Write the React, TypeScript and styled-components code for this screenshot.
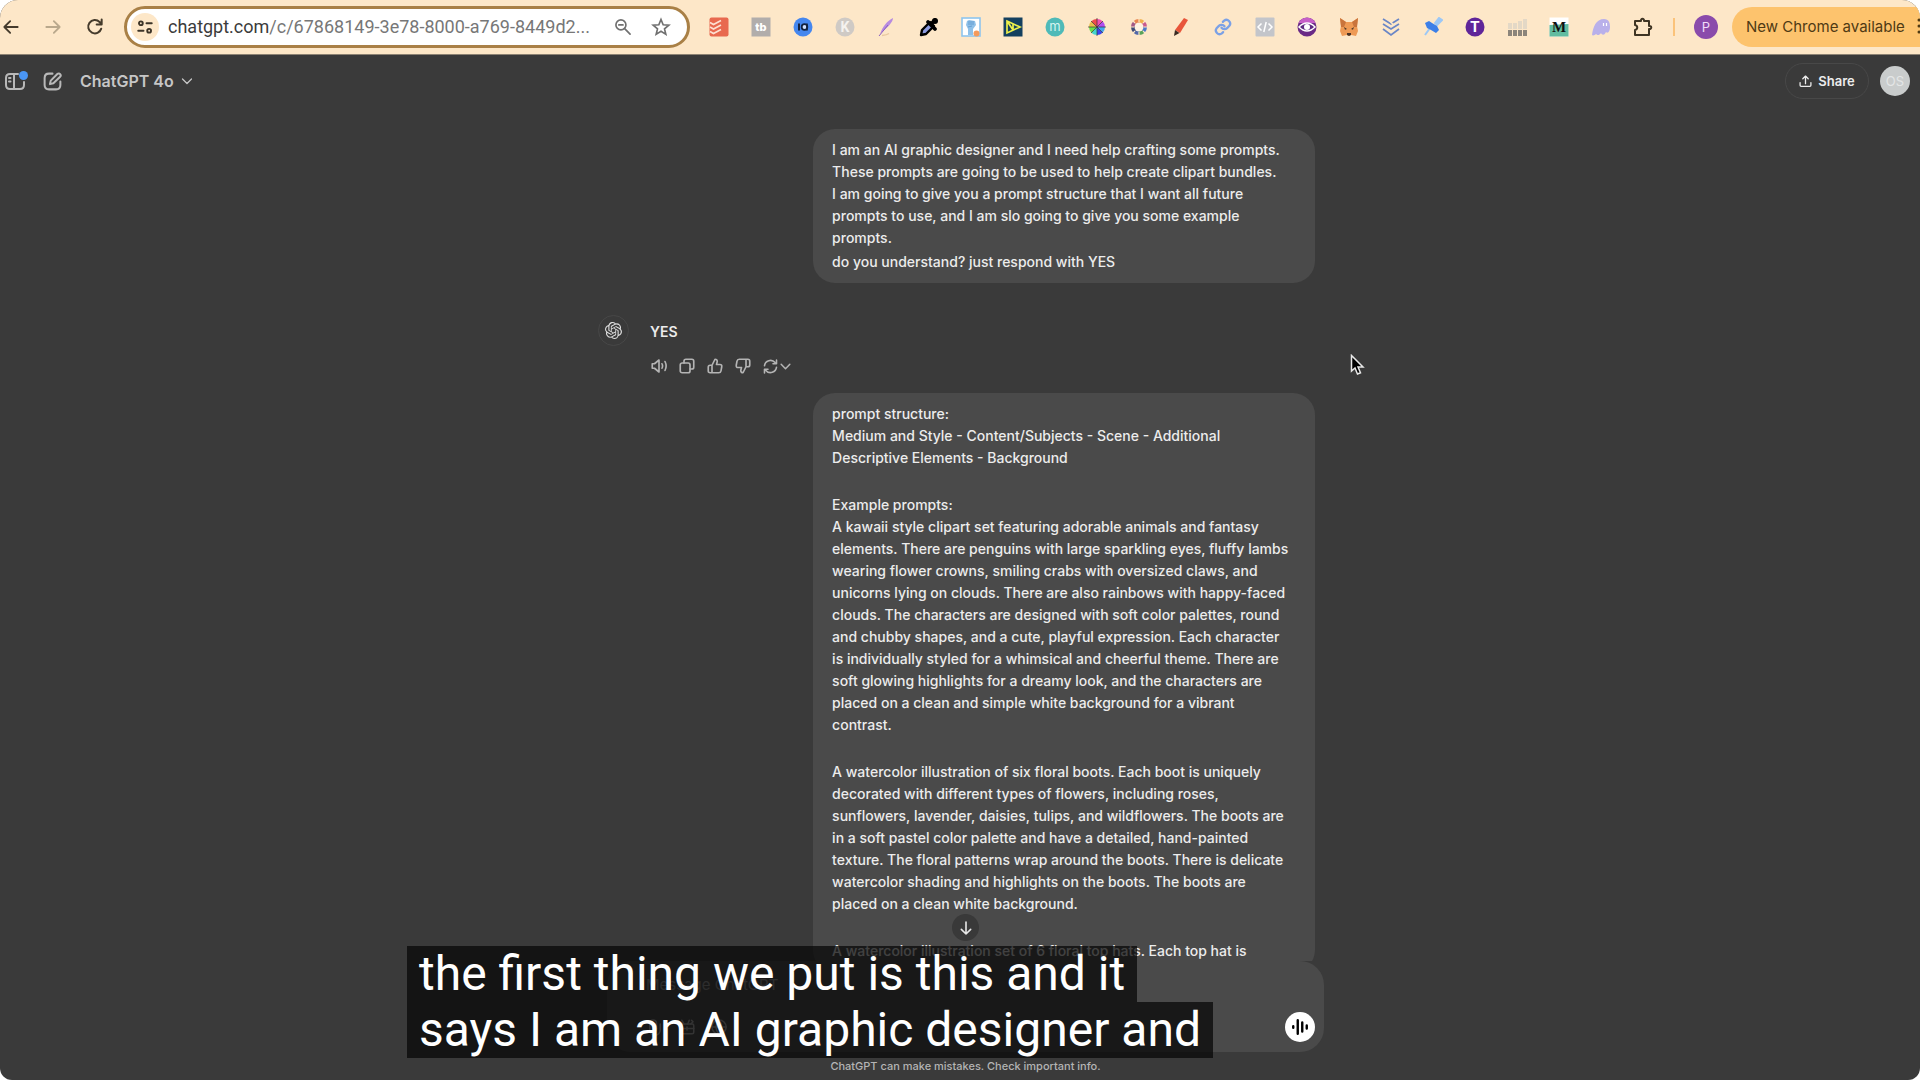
import React from "react";
import styled, { createGlobalStyle } from "styled-components";
import { SiOpenai } from "react-icons/si";

const GlobalStyle = createGlobalStyle`
  * { box-sizing: border-box; }
  body { margin: 0; background: #fff; font-family: Inter, "Liberation Sans", sans-serif; }
  button, input { font-family: inherit; }
  p { margin: 0; }
`;

const Screen = styled.div`
  position: relative;
  display: flex;
  flex-direction: column;
  height: 100vh;
  overflow: hidden;
  border-radius: 18px 18px 12px 12px;
  background: #3a3a3a;
  color: #ececec;
`;

/* ---------- browser toolbar ---------- */

const BrowserBar = styled.header`
  display: flex;
  align-items: center;
  flex: none;
  height: 55px;
  padding-bottom: 1px;
  background: #fde7c8;
  border-bottom: 1px solid #8d8374;
`;

const PlainButton = styled.button`
  display: flex;
  align-items: center;
  justify-content: center;
  padding: 0;
  border: 0;
  background: none;
  color: inherit;
  cursor: pointer;
`;

const NavButtons = styled.nav`
  display: flex;
  gap: 22px;
  padding: 0 19px 0 1px;
  color: #453b2c;
`;

const NavButton = styled(PlainButton)`
  width: 20px;
  height: 24px;
  &:disabled { color: #b9a88c; }
`;

const AddressBar = styled.div`
  display: flex;
  align-items: center;
  flex: 1;
  min-width: 0;
  height: 42px;
  padding: 0 16px 0 4px;
  border: 3px solid #a98046;
  border-radius: 21px;
  background: #fff;
  color: #6d6d6d;
`;

const SiteInfo = styled(PlainButton)`
  flex: none;
  width: 28px;
  height: 28px;
  border-radius: 50%;
  background: #fde7c8;
  color: #3c3428;
`;

const Address = styled.a`
  flex: 1;
  min-width: 0;
  overflow: hidden;
  padding-left: 9px;
  font: 400 18px/24px Roboto, sans-serif;
  color: #777;
  text-decoration: none;
  white-space: nowrap;
  span { color: #3b3b3b; }
`;

const AddressActions = styled.div`
  display: flex;
  gap: 18px;
  color: #707070;
`;

const Extensions = styled.div`
  display: flex;
  flex: none;
  padding: 0 9px 0 8px;
`;

const ExtensionButton = styled(PlainButton)`
  width: 42px;
  height: 32px;
`;

const Divider = styled.span`
  width: 2px;
  height: 18px;
  background: #fbc37a;
`;

const Profile = styled(PlainButton)`
  width: 24px;
  height: 24px;
  margin: 0 14px 0 19px;
  border-radius: 50%;
  background: #8a4bab;
  color: #f0dcf8;
  font-size: 13px;
`;

const UpdateButton = styled(PlainButton)`
  justify-content: space-between;
  width: 188px;
  height: 40px;
  padding-left: 14px;
  border-radius: 20px 0 0 20px;
  background: #fdc36d;
  color: #4f3a14;
  font-size: 15px;
  white-space: nowrap;
`;

/* ---------- ChatGPT header ---------- */

const ChatHeader = styled.div`
  display: flex;
  align-items: center;
  justify-content: space-between;
  flex: none;
  height: 52px;
  padding: 0 10px 0 4px;
  color: #b8b8b8;
`;

const HeaderGroup = styled.div<{ $gap: number }>`
  display: flex;
  align-items: center;
  gap: ${(p) => p.$gap}px;
`;

const ModelButton = styled(PlainButton)`
  gap: 7px;
  padding-left: 3px;
  color: #c6c6c6;
  font-size: 16px;
  font-weight: 600;
`;

const ShareButton = styled(PlainButton)`
  gap: 6px;
  width: 84px;
  height: 36px;
  border: 1px solid #484848;
  border-radius: 18px;
  color: #ececec;
  font-size: 13px;
  font-weight: 600;
`;

const UserButton = styled(PlainButton)`
  width: 30px;
  height: 30px;
  border-radius: 50%;
  background: #c9cccc;
  color: #e4e6e6;
  font-size: 13px;
`;

/* ---------- conversation ---------- */

const Thread = styled.main`
  display: flex;
  flex: 1;
  flex-direction: column;
  align-items: center;
  min-height: 0;
  overflow: hidden;
  padding: 22px 7px 0 0;
`;

const Column = styled.div`
  display: flex;
  flex-direction: column;
  width: 100%;
  max-width: 717px;
`;

const Bubble = styled.section<{ $gap: number }>`
  display: flex;
  flex-direction: column;
  align-self: flex-end;
  gap: ${(p) => p.$gap}px;
  width: 70%;
  padding: 10px 0 10px 19px;
  border-radius: 22px;
  background: #4a4a4a;
  font-size: 14px;
  font-weight: 500;
  line-height: 22px;
  white-space: pre-line;
`;

const Reply = styled.section`
  display: flex;
  gap: 21px;
  padding: 32px 0 18px;
`;

const ReplyAvatar = styled.span`
  display: flex;
  align-items: center;
  justify-content: center;
  width: 31px;
  height: 31px;
  border: 1px solid #474747;
  border-radius: 50%;
  color: #e0e0e0;
`;

const ReplyBody = styled.div`
  display: flex;
  flex-direction: column;
  gap: 14px;
  padding-top: 6px;
  font-size: 14px;
  font-weight: 600;
  line-height: 22px;
`;

const ReplyActions = styled.div`
  display: flex;
  gap: 10px;
  height: 18px;
  color: #b4b4b4;
`;

/* ---------- composer ---------- */

const ComposerArea = styled.footer`
  position: relative;
  display: flex;
  flex: none;
  flex-direction: column;
  align-items: center;
  padding-left: 11px;
`;

const ScrollButton = styled(PlainButton)`
  position: absolute;
  top: -47px;
  width: 27px;
  height: 27px;
  border-radius: 50%;
  background: #393939;
  color: #e6e6e6;
`;

const Composer = styled.form`
  display: flex;
  flex-direction: column;
  justify-content: space-between;
  width: 100%;
  max-width: 717px;
  height: 91px;
  padding: 12px 9px 10px 39px;
  border-radius: 24px;
  background: #4a4a4a;
`;

const Message = styled.input`
  padding: 0;
  border: 0;
  outline: 0;
  background: none;
  color: #ececec;
  font-size: 15px;
  line-height: 24px;
  &::placeholder { color: #9a9a9a; opacity: 1; }
`;

const ComposerTools = styled.div`
  display: flex;
  align-items: center;
  gap: 14px;
  color: #b4b4b4;
`;

const VoiceButton = styled(PlainButton)`
  width: 30px;
  height: 30px;
  margin-left: auto;
  border-radius: 50%;
  background: #fff;
  color: #000;
`;

const Disclaimer = styled.p`
  font-size: 11px;
  font-weight: 500;
  line-height: 28px;
  color: #b4b4b4;
`;

/* ---------- video overlays ---------- */

const Captions = styled.div`
  position: absolute;
  bottom: 22px;
  left: 407px;
  display: flex;
  flex-direction: column;
  align-items: flex-start;
`;

const CaptionLine = styled.span`
  padding: 0 12px;
  background: rgba(8, 8, 8, 0.75);
  color: #fff;
  font: 400 48px/56px Roboto, sans-serif;
  white-space: nowrap;
`;

const Pointer = styled.svg`
  position: absolute;
  top: 354px;
  left: 1350px;
`;

const Stroke = ({ size = 18, w = 2, children }: { size?: number; w?: number; children: React.ReactNode }) => (
  <svg width={size} height={size} viewBox="0 0 24 24" fill="none" stroke="currentColor" strokeWidth={w} strokeLinecap="round" strokeLinejoin="round">
    {children}
  </svg>
);

const Art = ({ children }: { children: React.ReactNode }) => (
  <svg width="20" height="20" viewBox="0 0 20 20">{children}</svg>
);

const wedge = (i: number, r: number) => {
  const a = (i * Math.PI) / 4;
  const b = ((i + 1) * Math.PI) / 4;
  return `M10 10L${10 + r * Math.cos(a)} ${10 + r * Math.sin(a)}A${r} ${r} 0 0 1 ${10 + r * Math.cos(b)} ${10 + r * Math.sin(b)}Z`;
};

const Letter = ({ children, size, fill = "#fff", family = "Inter", y = 14, weight = 700 }: {
  children: string; size: number; fill?: string; family?: string; y?: number; weight?: number;
}) => (
  <text x="10" y={y} textAnchor="middle" fontFamily={family} fontWeight={weight} fontSize={size} fill={fill}>{children}</text>
);

const extensions: { name: string; art: React.ReactNode }[] = [
  { name: "Todoist", art: <><rect x=".5" y=".5" width="19" height="19" rx="2" fill="#e8694f" /><g fill="none" stroke="#fde0d2" strokeWidth="1.6"><path d="M1 5.500l3.500 2L12 3.500" /><path d="M1 10l3.500 2L12 8" /><path d="M1 14.500l3.500 2L12 12.500" /></g></> },
  { name: "TubeBuddy", art: <><rect x=".5" y=".5" width="19" height="19" fill="#b1adab" /><Letter size={11} weight={800}>tb</Letter></> },
  { name: "vidIQ", art: <><circle cx="10" cy="10" r="9.500" fill="#4587ef" /><path d="M5 6.500h2v7H5z" fill="#14233f" /><circle cx="11.500" cy="10" r="2.800" fill="#cfe0ff" stroke="#14233f" strokeWidth="1.800" /><path d="M14 6.500v7" stroke="#14233f" strokeWidth="1.600" /></> },
  { name: "Keywords", art: <><circle cx="10" cy="10" r="9.500" fill="#cfcac5" /><Letter size={14} family="Roboto" y={15} fill="#f5f2ee">K</Letter></> },
  { name: "Quill", art: <><path d="M3 17C6 9 10 4 16 1c0 4-5 9-11 14z" fill="#b78be0" /><path d="M2 19L11 8" stroke="#8a5fc0" /><path d="M5 18.500q5-.5 7-2" stroke="#e8c9a0" strokeWidth="1.500" fill="none" /></> },
  { name: "Color picker", art: <><path d="M2 18l1-5 8-8 4 4-8 8z" fill="#8c9be0" stroke="#000" strokeWidth="2.400" strokeLinejoin="round" /><path d="M9 5l7 7M12 7l4-4" stroke="#000" strokeWidth="3.800" strokeLinecap="round" /><circle cx="16" cy="4" r="3" /></> },
  { name: "Power", art: <><rect x="1" y="1" width="18" height="18" fill="#fff" stroke="#8ec5ee" strokeWidth="1.600" /><path d="M6 4l2-1 6 1 1 4-3 4v6H7v-6L5 8z" fill="#8ec0e8" /><path d="M8 4v4M10 4v4M12 4v4M7 10l4-1" stroke="#5a96cc" strokeWidth=".8" /><circle cx="15.500" cy="16.500" r="3" fill="#f49a5c" /></> },
  { name: "Data player", art: <><rect x=".5" y=".5" width="19" height="19" fill="#14405f" /><path d="M4 4l13 6-13 6zM4 4l6 9M10 7v6" fill="none" stroke="#edf04c" strokeWidth="1.700" /></> },
  { name: "Marmof", art: <><circle cx="10" cy="10" r="9.500" fill="#4fbab8" /><Letter size={13} fill="#d5f4f0" weight={400}>m</Letter></> },
  { name: "Color wheel", art: <>{["#45a6ef", "#3b47f0", "#45d6cf", "#6be04a", "#e8c04a", "#f04c4c", "#ef4fb1", "#b24cf0"].map((c, i) => <path key={c} d={wedge(i, 8)} fill={c} />)}<path d="M10 1v18M1 10h18M4 4l12 12M16 4L4 16" stroke="#333" strokeWidth=".7" /></> },
  { name: "Palette ring", art: <>{["#4b78c8", "#59a35a", "#5168a8", "#3f4c78", "#a45a86", "#e8854f", "#f0b04c", "#c85a8e"].map((c, i) => <path key={c} d={wedge(i, 8)} fill={c} />)}<circle cx="10" cy="10" r="4.500" fill="#fff3e2" /><path d="M10 1v4M10 15v4M1 10h4M15 10h4M4 4l2 2M14 14l2 2M16 4l-2 2M6 14l-2 2" stroke="#fde7c8" strokeWidth="1.200" /></> },
  { name: "Marker", art: <><path d="M13 1l4 2-8 13-5-3z" fill="#e8553a" /><path d="M4 13l4.500 3L3 19z" fill="#3a2a22" /></> },
  { name: "Link", art: <g transform="translate(1 1) scale(.75)" fill="none" stroke="#7ba1e6" strokeWidth="3" strokeLinecap="round"><path d="M10 13a5 5 0 0 0 7.500.5l3-3a5 5 0 0 0-7-7l-1.700 1.700" /><path d="M14 11a5 5 0 0 0-7.500-.5l-3 3a5 5 0 0 0 7 7l1.700-1.700" /></g> },
  { name: "Source", art: <><rect x=".5" y=".5" width="19" height="19" rx="1" fill="#c3c5ca" /><path d="M6.500 6.500L3 10l3.500 3.500M13.500 6.500L17 10l-3.500 3.500M11.200 5L8.800 15" fill="none" stroke="#fff" strokeWidth="1.500" /></> },
  { name: "Eye", art: <><circle cx="10" cy="10" r="9.500" fill="#6a2a86" /><path d="M1.500 6a9.500 9.500 0 0 1 17 0z" fill="#c65fc8" /><path d="M2 10q8-8 16 0-8 8-16 0z" fill="#5d2a80" stroke="#fff" strokeWidth="1.500" /><circle cx="10" cy="10" r="3" fill="#fff" /></> },
  { name: "MetaMask", art: <><path d="M1 1l6 4h6l6-4-1 8 1 5-2 5-5-1-2 1-2-1-5 1-2-5 1-5z" fill="#ee9a55" /><path d="M1 1l6 4-2 5-3 0zM19 1l-6 4 2 5 3 0z" fill="#c9743c" /><path d="M5 10l3 2-2 .8zM15 10l-3 2 2 .8z" fill="#4a3528" /><path d="M8 16h4v2l-2 1-2-1z" fill="#4a3528" /></> },
  { name: "Chevrons", art: <g fill="none" stroke="#6a86c6" strokeWidth="1.700"><path d="M2 2l8 5 8-5M2 7l8 5 8-5M2 12l8 6 8-6" /><path d="M13 8.500L8 3" stroke="#fde7c8" /></g> },
  { name: "Pin", art: <><path d="M2 18L7 11M12 6l4-5 3 2-5 5z" fill="#9dc8f6" stroke="#9dc8f6" strokeWidth="2" /><path d="M2 6l4-2 3 2 5 3 2 4-3 3-5-3-4-2z" fill="#3b7fe8" /></> },
  { name: "Text", art: <><circle cx="10" cy="10" r="9.500" fill="#5f2599" /><Letter size={15} family="Roboto" y={15}>T</Letter></> },
  { name: "Bars", art: <><path d="M1 6h4v6H1zM6 6h4v6H6zM11 4h4v8h-4zM16 2h4v10h-4z" fill="#e3d8c6" /><path d="M1 13h4v6H1zM6 13h4v6H6zM11 13h4v6h-4zM16 13h4v6h-4z" fill="#8c857b" /></> },
  { name: "Merch", art: <><path d="M.5.500h19v19H.500z" fill="#fff" /><path d="M.5 8l19-1v12.500H.500z" fill="#62bca0" /><Letter size={15} family="Liberation Serif" y={15} fill="#111">M</Letter></> },
  { name: "Ghost", art: <><path d="M1 18C2 10 5 2 13 2c5 0 6 4 6 8 0 4-2 7-4 5-2 4-4 3-5 1-2 3-4 2-5 1-1 1-3 2-4 1z" fill="#b9b0ea" /><path d="M12.500 6v3M15.500 6v3" stroke="#fff" strokeWidth="1.200" /></> },
  { name: "Extensions", art: <path d="M2 4h6c-.5-3 3.500-3 3 0h5v5c3-.5 3 3.500 0 3v6H2v-5c3-.5 3-4.500 0-5z" fill="none" stroke="#3f3524" strokeWidth="2" strokeLinejoin="round" /> },
];

const firstPrompt = [
  `I am an AI graphic designer and I need help crafting some prompts.
  These prompts are going to be used to help create clipart bundles.
  I am going to give you a prompt structure that I want all future
  prompts to use, and I am slo going to give you some example
  prompts.`,
  `do you understand? just respond with YES`,
];

const secondPrompt = [
  `prompt structure:
  Medium and Style - Content/Subjects - Scene - Additional
  Descriptive Elements - Background`,
  `Example prompts:
  A kawaii style clipart set featuring adorable animals and fantasy
  elements. There are penguins with large sparkling eyes, fluffy lambs
  wearing flower crowns, smiling crabs with oversized claws, and
  unicorns lying on clouds. There are also rainbows with happy-faced
  clouds. The characters are designed with soft color palettes, round
  and chubby shapes, and a cute, playful expression. Each character
  is individually styled for a whimsical and cheerful theme. There are
  soft glowing highlights for a dreamy look, and the characters are
  placed on a clean and simple white background for a vibrant
  contrast.`,
  `A watercolor illustration of six floral boots. Each boot is uniquely
  decorated with different types of flowers, including roses,
  sunflowers, lavender, daisies, tulips, and wildflowers. The boots are
  in a soft pastel color palette and have a detailed, hand-painted
  texture. The floral patterns wrap around the boots. There is delicate
  watercolor shading and highlights on the boots. The boots are
  placed on a clean white background.`,
  `A watercolor illustration set of 6 floral top hats. Each top hat is`,
];

export default function App() {
  return (
    <Screen>
      <GlobalStyle />
      <BrowserBar>
        <NavButtons>
          <NavButton aria-label="Back"><Stroke size={20} w={2.2}><path d="M20 12H4M11 5l-7 7 7 7" /></Stroke></NavButton>
          <NavButton aria-label="Forward" disabled><Stroke size={20} w={2.2}><path d="M4 12h16M13 5l7 7-7 7" /></Stroke></NavButton>
          <NavButton aria-label="Reload"><Stroke size={20} w={2.4}><path d="M19.500 14a8 8 0 1 1-2-8l2.500 2.500M20 3v6h-6" /></Stroke></NavButton>
        </NavButtons>
        <AddressBar>
          <SiteInfo aria-label="Site information">
            <Stroke size={18} w={2.6}><circle cx="6.500" cy="7" r="2.500" /><path d="M14 7h7M3 17h7" /><circle cx="17.500" cy="17" r="2.500" /></Stroke>
          </SiteInfo>
          <Address href="#"><span>chatgpt.com</span>/c/67868149-3e78-8000-a769-8449d2...</Address>
          <AddressActions>
            <PlainButton aria-label="Zoom"><Stroke size={20} w={2}><circle cx="9.500" cy="9.500" r="6" /><path d="M14 14l6.500 6.500M7 9.500h5" /></Stroke></PlainButton>
            <PlainButton aria-label="Bookmark"><Stroke size={20} w={2}><path d="M12 3l2.600 6.300 6.800.5-5.200 4.400 1.600 6.600-5.800-3.600-5.800 3.600 1.600-6.600L2.600 9.800l6.800-.5z" strokeLinejoin="miter" /></Stroke></PlainButton>
          </AddressActions>
        </AddressBar>
        <Extensions>
          {extensions.map((e) => (
            <ExtensionButton key={e.name} aria-label={e.name}><Art>{e.art}</Art></ExtensionButton>
          ))}
        </Extensions>
        <Divider />
        <Profile aria-label="Profile">P</Profile>
        <UpdateButton>
          New Chrome available
          <svg width="3" height="18" viewBox="0 0 3 18"><g fill="#4f3a14"><circle cx="2" cy="2" r="1.500" /><circle cx="2" cy="8" r="1.500" /><circle cx="2" cy="14" r="1.500" /></g></svg>
        </UpdateButton>
      </BrowserBar>

      <ChatHeader>
        <HeaderGroup $gap={14}>
          <PlainButton aria-label="Open sidebar">
            <svg width="24" height="22" viewBox="0 0 24 22" fill="none" stroke="currentColor" strokeWidth="2" strokeLinecap="round">
              <path d="M14 4H6Q2 4 2 8v7q0 4 4 4h10q4 0 4-4v-3M10 4v15M5 8h1.500M5 11.500h1.500" />
              <circle cx="19.500" cy="5.500" r="4.500" fill="#4a96f5" stroke="none" />
            </svg>
          </PlainButton>
          <PlainButton aria-label="New chat"><Stroke size={21} w={2.3}><path d="M12 3H8Q3 3 3 8v8q0 5 5 5h8q5 0 5-5v-4" /><path d="M9 15l1-4 7.500-7.500c1-1 2.500-.8 3.200 0s.9 2.200 0 3.100L13 14z" /></Stroke></PlainButton>
          <ModelButton>ChatGPT 4o <Stroke size={12} w={2.6}><path d="M3 8l9 9 9-9" /></Stroke></ModelButton>
        </HeaderGroup>
        <HeaderGroup $gap={11}>
          <ShareButton><Stroke size={13} w={2.4}><path d="M12 16V3M7 7l5-5 5 5M2 14v5q0 2 2 2h16q2 0 2-2v-5" /></Stroke>Share</ShareButton>
          <UserButton aria-label="Account">OS</UserButton>
        </HeaderGroup>
      </ChatHeader>

      <Thread>
        <Column>
          <Bubble $gap={2}>{firstPrompt.map((t) => <p key={t}>{t}</p>)}</Bubble>
          <Reply>
            <ReplyAvatar><SiOpenai size={17} /></ReplyAvatar>
            <ReplyBody>
              <p>YES</p>
              <ReplyActions>
                <PlainButton aria-label="Read aloud"><Stroke w={2.2}><path d="M3 9v6h3l6 5V4L6 9z" /><path d="M16 9q1.500 3 0 6M20 6q3 6 0 12" /></Stroke></PlainButton>
                <PlainButton aria-label="Copy"><Stroke w={2.2}><rect x="3" y="8" width="13" height="13" rx="2.500" /><path d="M8 8V5.500Q8 3 10.500 3h8Q21 3 21 5.500v8q0 2.500-2.500 2.500H16" /></Stroke></PlainButton>
                <PlainButton aria-label="Good response"><Stroke w={2.2}><path d="M8 21H5.500Q3 21 3 18.500v-5Q3 11 5.500 11H8zM8 11l4-8q3 0 3 3l-1 4h4.500q3 0 2.500 3l-1 5.500q-.5 2.500-3 2.500H8" /></Stroke></PlainButton>
                <PlainButton aria-label="Bad response"><Stroke w={2.2}><path d="M16 3h2.500Q21 3 21 5.500v5q0 2.500-2.500 2.500H16zM16 13l-4 8q-3 0-3-3l1-4H5.500q-3 0-2.500-3L4 5.500Q4.500 3 7 3h9" /></Stroke></PlainButton>
                <PlainButton aria-label="Try another model">
                  <Stroke size={17} w={2.2}><path d="M3.500 11a8.500 8.500 0 0 1 15-4.500L20 8M20.500 3v5h-5M20.500 13a8.500 8.500 0 0 1-15 4.500L4 16M3.500 21v-5h5" /></Stroke>
                  <Stroke size={13} w={2.8}><path d="M4 8l8 8 8-8" /></Stroke>
                </PlainButton>
              </ReplyActions>
            </ReplyBody>
          </Reply>
          <Bubble $gap={25}>{secondPrompt.map((t) => <p key={t}>{t}</p>)}</Bubble>
        </Column>
      </Thread>

      <ComposerArea>
        <ScrollButton aria-label="Scroll to bottom"><Stroke size={16} w={2.4}><path d="M12 3v18M5 14l7 7 7-7" /></Stroke></ScrollButton>
        <Composer onSubmit={(e) => e.preventDefault()}>
          <Message aria-label="Message ChatGPT" placeholder="Message ChatGPT" />
          <ComposerTools>
            <PlainButton type="button" aria-label="Attach"><Stroke><path d="M19 8v8a7 7 0 0 1-14 0V7a4.500 4.500 0 0 1 9 0v8a2 2 0 0 1-4 0V8" /></Stroke></PlainButton>
            <PlainButton type="button" aria-label="Tools"><Stroke><rect x="3" y="8" width="18" height="13" rx="2" /><path d="M3 14h18M12 12v4M5 3l3 5M15 3l-2 5M18 3l2 2-3 3" /></Stroke></PlainButton>
            <PlainButton type="button" aria-label="Search the web"><Stroke><circle cx="12" cy="12" r="9.500" /><path d="M2.500 12h19M12 2.500q-8 9.500 0 19 8-9.500 0-19" /></Stroke></PlainButton>
            <VoiceButton type="button" aria-label="Voice mode"><Stroke size={18} w={3.2}><path d="M3 11v2M9 3v18M15 6v12M21 10v4" /></Stroke></VoiceButton>
          </ComposerTools>
        </Composer>
        <Disclaimer>ChatGPT can make mistakes. Check important info.</Disclaimer>
      </ComposerArea>

      <Captions>
        <CaptionLine>the first thing we put is this and it</CaptionLine>
        <CaptionLine>says I am an AI graphic designer and</CaptionLine>
      </Captions>
      <Pointer width="15" height="22" viewBox="0 0 15 22">
        <path d="M1.500 1.500v15.500l3.500-3 2.500 6 3-1.200L8 13h5z" fill="#000" stroke="#e8e8e8" strokeWidth="1.500" />
      </Pointer>
    </Screen>
  );
}
